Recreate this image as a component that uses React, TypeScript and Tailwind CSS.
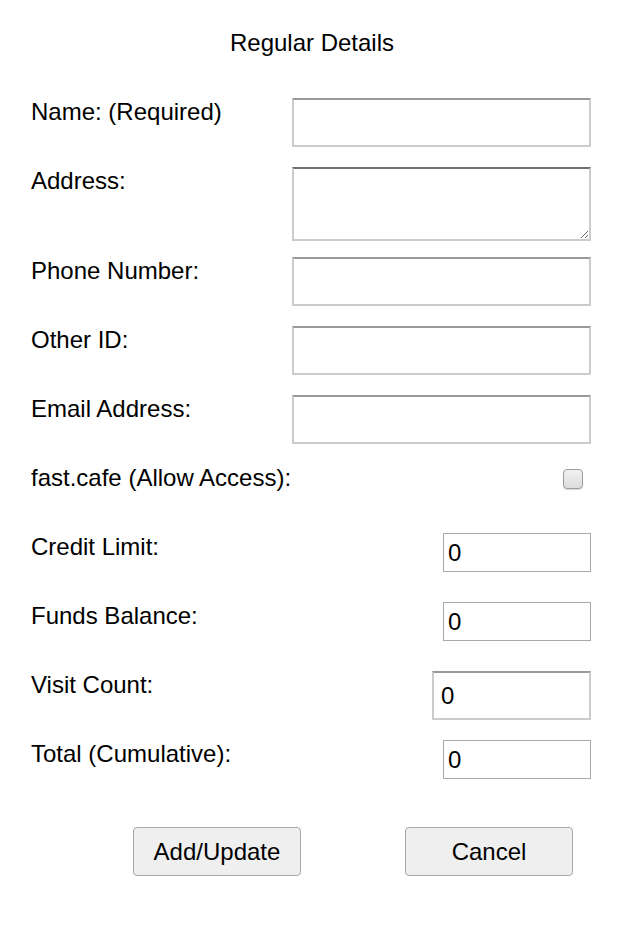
import React from 'react';

const bigInput =
  'w-[299px] h-[49px] border-2 border-t-[#999999] border-x-[#cccccc] border-b-[#cccccc] bg-white outline-none';

function Row({ label, children, tall }: { label: string; children: React.ReactNode; tall?: boolean }) {
  return (
    <div className={`flex justify-between items-start ${tall ? 'mb-[16px]' : 'mb-[20px]'}`}>
      <label className="leading-[28px]">{label}</label>
      {children}
    </div>
  );
}

function SmallInput() {
  return (
    <input
      type="text"
      defaultValue="0"
      className="w-[148px] h-[39px] border border-[#a9a9a9] bg-white pl-[4px] text-[24px] outline-none"
    />
  );
}

export default function App() {
  return (
    <div className="min-h-[925px] w-[621px] bg-white text-black text-[24px] font-['Liberation_Sans',Arial,sans-serif]">
      <div className="pl-[31px] pr-[30px]">
        <h1 className="pt-[29px] text-center text-[24px] leading-[28px] pl-[2px]">Regular Details</h1>

        <div className="mt-[41px]">
          <Row label="Name: (Required)">
            <input type="text" className={bigInput} />
          </Row>
          <Row label="Address:" tall>
            <textarea className="w-[299px] h-[74px] border-2 border-t-[#6e6e6e] border-x-[#cccccc] border-b-[#cccccc] bg-white outline-none" />
          </Row>
          <Row label="Phone Number:">
            <input type="text" className={bigInput} />
          </Row>
          <Row label="Other ID:">
            <input type="text" className={bigInput} />
          </Row>
          <Row label="Email Address:">
            <input type="text" className={bigInput} />
          </Row>
          <div className="flex justify-between items-start h-[49px] mb-[20px]">
            <label className="leading-[28px]">fast.cafe (Allow Access):</label>
            <div className="mt-[5px] mr-[8px] w-[20px] h-[20px] rounded-[4px] border border-[#9c9c9c] bg-gradient-to-b from-[#f2f2f2] to-[#dcdcdc] shadow-[0_1px_1px_rgba(0,0,0,0.15)]" />
          </div>
          <Row label="Credit Limit:">
            <div className="h-[49px]">
              <SmallInput />
            </div>
          </Row>
          <Row label="Funds Balance:">
            <div className="h-[49px]">
              <SmallInput />
            </div>
          </Row>
          <Row label="Visit Count:">
            <input
              type="text"
              defaultValue="0"
              className="w-[159px] h-[49px] border-2 border-t-[#999999] border-x-[#cccccc] border-b-[#cccccc] bg-white pl-[7px] text-[24px] outline-none"
            />
          </Row>
          <Row label="Total (Cumulative):">
            <div className="h-[49px]">
              <SmallInput />
            </div>
          </Row>
        </div>
      </div>

      <div className="flex pl-[133px] gap-[104px] mt-[38px]">
        <button className="w-[168px] h-[49px] rounded-[4px] border border-[#a8a8a8] bg-[#efefef] text-[24px]">
          Add/Update
        </button>
        <button className="w-[168px] h-[49px] rounded-[4px] border border-[#a8a8a8] bg-[#efefef] text-[24px]">
          Cancel
        </button>
      </div>
    </div>
  );
}
